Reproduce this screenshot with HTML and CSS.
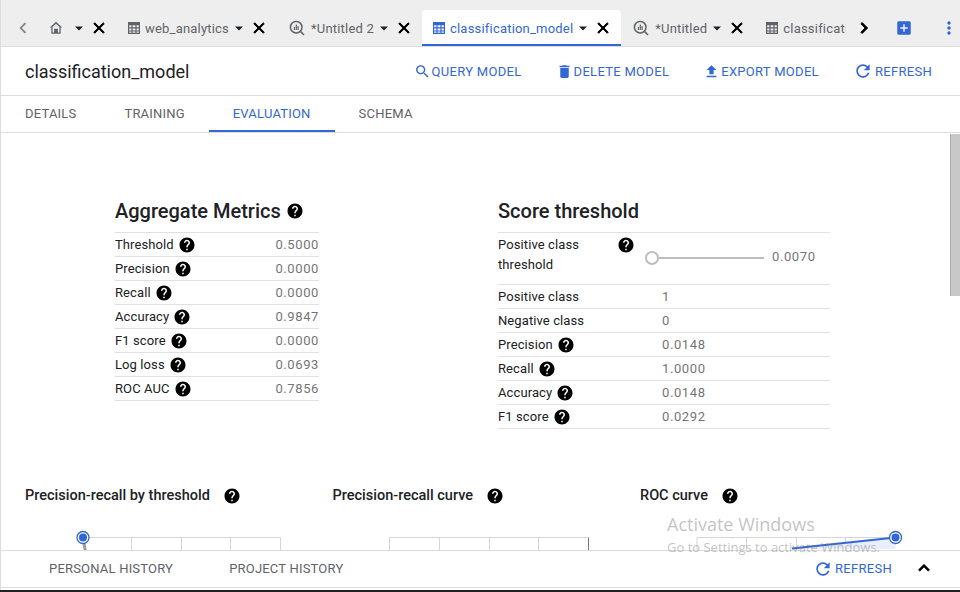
FILE: index.html
```html
<!DOCTYPE html>
<html lang="en">
<head>
    <meta charset="UTF-8">
    <meta name="viewport" content="width=device-width, initial-scale=1.0">
    <title>classification_model</title>
    <link rel="stylesheet" href="styles.css">
</head>
<body>

<svg class="defs" width="0" height="0">
    <symbol id="i-help" viewBox="0 0 24 24"><path d="M12 2C6.48 2 2 6.48 2 12s4.48 10 10 10 10-4.48 10-10S17.52 2 12 2zm1 17h-2v-2h2v2zm2.07-7.75l-.9.92C13.45 12.9 13 13.5 13 15h-2v-.5c0-1.1.45-2.1 1.17-2.83l1.24-1.26c.37-.36.59-.86.59-1.41 0-1.1-.9-2-2-2s-2 .9-2 2H8c0-2.21 1.79-4 4-4s4 1.79 4 4c0 .88-.36 1.68-.93 2.25z"/></symbol>
    <symbol id="i-close" viewBox="0 0 24 24"><path d="M19 6.41L17.59 5 12 10.59 6.41 5 5 6.41 10.59 12 5 17.59 6.41 19 12 13.41 17.59 19 19 17.59 13.41 12z" stroke="currentColor" stroke-width="1.2"/></symbol>
    <symbol id="i-caret" viewBox="0 0 16 16"><path d="M4 6.5h8l-4 4z"/></symbol>
    <symbol id="i-table" viewBox="0 0 18 18"><path fill-rule="evenodd" d="M3 3h12v12H3zM4.2 6.2v2h2.2v-2zm3.4 0v2h2.8v-2zm4 0v2h2.2v-2zM4.2 9.4v2h2.2v-2zm3.4 0v2h2.8v-2zm4 0v2h2.2v-2zM4.2 12.6v1.2h2.2v-1.2zm3.4 0v1.2h2.8v-1.2zm4 0v1.2h2.2v-1.2z"/></symbol>
    <symbol id="i-query" viewBox="0 0 18 18"><circle cx="8.2" cy="8.2" r="5.8" fill="none" stroke="currentColor" stroke-width="1.5"/><path d="M12.4 12.4l3.6 3.6" stroke="currentColor" stroke-width="1.5"/><path d="M5.8 8h1.2v3H5.800zM7.700 5.500h1.200V11H7.700zM9.500 7h1.200v4H9.500z"/></symbol>
    <symbol id="i-search" viewBox="0 0 24 24"><path d="M15.500 14h-.79l-.28-.27C15.410 12.590 16 11.110 16 9.500 16 5.910 13.090 3 9.500 3S3 5.910 3 9.500 5.910 16 9.500 16c1.610 0 3.090-.59 4.230-1.570l.27.28v.79l5 4.990L20.490 19l-4.990-5zm-6 0C7.010 14 5 11.990 5 9.500S7.010 5 9.500 5 14 7.010 14 9.500 11.990 14 9.500 14z"/></symbol>
    <symbol id="i-delete" viewBox="0 0 24 24"><path d="M6 19c0 1.100.9 2 2 2h8c1.100 0 2-.9 2-2V7H6v12zM19 4h-3.500l-1-1h-5l-1 1H5v2h14V4z"/></symbol>
    <symbol id="i-export" viewBox="0 0 24 24"><path d="M9 16h6v-6h4l-7-7-7 7h4zm-4 2h14v2H5z"/></symbol>
    <symbol id="i-refresh" viewBox="0 0 24 24"><path d="M17.650 6.350C16.200 4.900 14.210 4 12 4c-4.420 0-7.990 3.580-7.990 8s3.570 8 7.990 8c3.730 0 6.840-2.550 7.730-6h-2.080c-.82 2.330-3.040 4-5.650 4-3.310 0-6-2.690-6-6s2.690-6 6-6c1.660 0 3.140.69 4.220 1.780L13 11h7V4l-2.350 2.350z"/></symbol>
</svg>

<div class="app">

    <div class="tabbar">
        <svg class="nav-arrow grey" viewBox="0 0 24 24"><path d="M15.410 7.410L14 6l-6 6 6 6 1.410-1.410L10.830 12z"/></svg>

        <div class="tab">
            <svg class="tab-icon" viewBox="0 0 18 18"><path fill-rule="evenodd" d="M9 2.800L2.800 8.500h1.500v6.200h9.400V8.500h1.500zM9 4.700l3.400 3.100v5.700h-1.500v-3.700H7.100v3.700H5.600V7.800z"/></svg>
            <svg class="caret home-caret"><use href="#i-caret"/></svg>
            <svg class="close"><use href="#i-close"/></svg>
        </div>
        <div class="tab">
            <svg class="tab-icon"><use href="#i-table"/></svg>
            <span class="tab-label">web_analytics</span>
            <svg class="caret"><use href="#i-caret"/></svg>
            <svg class="close"><use href="#i-close"/></svg>
        </div>
        <div class="tab">
            <svg class="tab-icon query"><use href="#i-query"/></svg>
            <span class="tab-label">*Untitled 2</span>
            <svg class="caret"><use href="#i-caret"/></svg>
            <svg class="close"><use href="#i-close"/></svg>
        </div>
        <div class="tab active">
            <svg class="tab-icon"><use href="#i-table"/></svg>
            <span class="tab-label">classification_model</span>
            <svg class="caret"><use href="#i-caret"/></svg>
            <svg class="close"><use href="#i-close"/></svg>
        </div>
        <div class="tab">
            <svg class="tab-icon query"><use href="#i-query"/></svg>
            <span class="tab-label">*Untitled</span>
            <svg class="caret"><use href="#i-caret"/></svg>
            <svg class="close"><use href="#i-close"/></svg>
        </div>
        <div class="tab last">
            <svg class="tab-icon"><use href="#i-table"/></svg>
            <span class="tab-label clipped">classification_model</span>
        </div>

        <svg class="nav-arrow next" viewBox="0 0 24 24"><path d="M10 6L8.590 7.410 13.170 12l-4.580 4.590L10 18l6-6z" stroke="currentColor" stroke-width="1"/></svg>
        <svg class="add-tab" viewBox="0 0 24 24"><path d="M19 3H5c-1.110 0-2 .9-2 2v14c0 1.100.89 2 2 2h14c1.100 0 2-.9 2-2V5c0-1.100-.9-2-2-2zm-2 10h-4v4h-2v-4H7v-2h4V7h2v4h4v2z"/></svg>
        <svg class="more" viewBox="0 0 24 24"><path d="M12 8c1.100 0 2-.9 2-2s-.9-2-2-2-2 .9-2 2 .9 2 2 2zm0 2c-1.100 0-2 .9-2 2s.9 2 2 2 2-.9 2-2-.9-2-2-2zm0 6c-1.100 0-2 .9-2 2s.9 2 2 2 2-.9 2-2-.9-2-2-2z"/></svg>
    </div>

    <div class="page-header">
        <h1>classification_model</h1>
        <div class="actions">
            <a class="action"><svg><use href="#i-search"/></svg>QUERY MODEL</a>
            <a class="action"><svg><use href="#i-delete"/></svg>DELETE MODEL</a>
            <a class="action"><svg><use href="#i-export"/></svg>EXPORT MODEL</a>
            <a class="action"><svg class="big"><use href="#i-refresh"/></svg>REFRESH</a>
        </div>
    </div>

    <div class="subnav">
        <a>DETAILS</a>
        <a>TRAINING</a>
        <a class="active">EVALUATION</a>
        <a>SCHEMA</a>
    </div>

    <div class="main">
        <div class="metrics">
            <div class="aggregate">
                <h2>Aggregate Metrics <svg class="help"><use href="#i-help"/></svg></h2>
                <div class="table">
                    <div class="row"><span class="name">Threshold <svg class="help"><use href="#i-help"/></svg></span><span class="value">0.5000</span></div>
                    <div class="row"><span class="name">Precision <svg class="help"><use href="#i-help"/></svg></span><span class="value">0.0000</span></div>
                    <div class="row"><span class="name">Recall <svg class="help"><use href="#i-help"/></svg></span><span class="value">0.0000</span></div>
                    <div class="row"><span class="name">Accuracy <svg class="help"><use href="#i-help"/></svg></span><span class="value">0.9847</span></div>
                    <div class="row"><span class="name">F1 score <svg class="help"><use href="#i-help"/></svg></span><span class="value">0.0000</span></div>
                    <div class="row"><span class="name">Log loss <svg class="help"><use href="#i-help"/></svg></span><span class="value">0.0693</span></div>
                    <div class="row"><span class="name">ROC AUC <svg class="help"><use href="#i-help"/></svg></span><span class="value">0.7856</span></div>
                </div>
            </div>

            <div class="threshold">
                <h2>Score threshold</h2>
                <div class="table">
                    <div class="row tall">
                        <span class="tall-name">Positive class threshold</span>
                        <svg class="help tall-help"><use href="#i-help"/></svg>
                        <div class="slider"><span class="thumb"></span><span class="track"></span></div>
                        <span class="value">0.0070</span>
                    </div>
                    <div class="row wide"><span class="name">Positive class</span><span class="value">1</span></div>
                    <div class="row wide"><span class="name">Negative class</span><span class="value">0</span></div>
                    <div class="row wide"><span class="name">Precision <svg class="help"><use href="#i-help"/></svg></span><span class="value">0.0148</span></div>
                    <div class="row wide"><span class="name">Recall <svg class="help"><use href="#i-help"/></svg></span><span class="value">1.0000</span></div>
                    <div class="row wide"><span class="name">Accuracy <svg class="help"><use href="#i-help"/></svg></span><span class="value">0.0148</span></div>
                    <div class="row wide"><span class="name">F1 score <svg class="help"><use href="#i-help"/></svg></span><span class="value">0.0292</span></div>
                </div>
            </div>
        </div>

        <div class="charts">
            <div class="chart">
                <h3>Precision-recall by threshold <svg class="help"><use href="#i-help"/></svg></h3>
                <svg class="plot" viewBox="0 0 308 60">
                    <path class="grid" d="M58 12.500H255.500M106.500 12.500V60M156.500 12.500V60M205.500 12.500V60M255.500 12.500V60"/>
                    <path d="M58 12.500L61 30" stroke="#9e9e9e" stroke-width="3" fill="none"/>
                    <circle cx="58" cy="12.500" r="6" fill="#fff" stroke="#3367d6" stroke-width="1.300"/>
                    <circle cx="58" cy="12.500" r="4" fill="#3367d6"/>
                </svg>
            </div>
            <div class="chart">
                <h3>Precision-recall curve <svg class="help"><use href="#i-help"/></svg></h3>
                <svg class="plot" viewBox="0 0 308 60">
                    <path class="grid" d="M56.500 12.500H255.500M56.500 12.500V60M106.500 12.500V60M156.500 12.500V60M205.500 12.500V60"/>
                    <path d="M255.500 12.500V60" stroke="#757575" fill="none"/>
                </svg>
            </div>
            <div class="chart">
                <h3>ROC curve <svg class="help"><use href="#i-help"/></svg></h3>
                <svg class="plot" viewBox="0 0 308 60">
                    <path class="grid" d="M57 12.500H255.500M57 12.500V60M106.500 12.500V60M156.500 12.500V60M205.500 12.500V60"/>
                    <path d="M152 23.500L255.500 12.500V24z" fill="#e8eefb"/>
                    <path d="M152 23.500L255.500 12.500" stroke="#3367d6" stroke-width="2" fill="none"/>
                    <circle cx="255.500" cy="12.500" r="6" fill="#fff" stroke="#3367d6" stroke-width="1.300"/>
                    <circle cx="255.500" cy="12.500" r="4" fill="#3367d6"/>
                </svg>
            </div>
        </div>

        <div class="scroll-thumb"></div>
    </div>

    <div class="history">
        <a>PERSONAL HISTORY</a>
        <a>PROJECT HISTORY</a>
        <span class="action history-refresh"><svg class="big"><use href="#i-refresh"/></svg>REFRESH</span>
        <svg class="collapse" viewBox="0 0 24 24"><path d="M12 8l-6 6 1.410 1.410L12 10.830l4.590 4.580L18 14z" stroke="currentColor" stroke-width=".8"/></svg>
    </div>

    <div class="watermark">
        <div class="wm-title">Activate Windows</div>
        <div class="wm-sub">Go to Settings to activate Windows.</div>
    </div>
</div>

<div class="taskbar"></div>

</body>
</html>
```

FILE: styles.css
```css
* {
    box-sizing: border-box;
}
body {
    font-family: Roboto, 'Noto Sans', sans-serif;
    background-color: #ffffff;
    color: #202124;
    margin: 0;
    height: 592px;
    overflow: hidden;
    display: flex;
    flex-direction: column;
}
.defs {
    position: absolute;
}
svg {
    fill: currentColor;
    flex: none;
}
.app {
    position: relative;
    flex: 1;
    min-height: 0;
    display: flex;
    flex-direction: column;
    border-left: 1px solid #dddddd;
}
.taskbar {
    height: 2px;
    background: #202124;
}

/* top tab strip */
.tabbar {
    height: 47px;
    flex: none;
    display: flex;
    align-items: flex-end;
    background-color: #eeeeee;
    border-bottom: 1px solid #dddddd;
    padding-left: 13px;
}
.nav-arrow {
    width: 18px;
    height: 18px;
    margin-right: 9px;
    margin-bottom: 9px;
    color: #000;
}
.nav-arrow.grey {
    width: 22px;
    height: 22px;
    margin: 0 5px 7px -2px;
    color: #80868b;
}
.nav-arrow.next {
    width: 22px;
    height: 22px;
    margin: 0 0 7px 7px;
}
.tab {
    height: 36px;
    display: flex;
    align-items: center;
    padding: 0 9px 0 8px;
    font-size: 13px;
    letter-spacing: 0.2px;
    color: #5f6368;
}
.tab.active {
    background: #ffffff;
    color: #3367d6;
    border-radius: 4px 4px 0 0;
    border-bottom: 2px solid #3367d6;
    height: 36px;
    padding-top: 2px;
}
.tab.last {
    padding-right: 0;
}
.tab-icon {
    width: 18px;
    height: 18px;
    margin-right: 2px;
}
.tab-icon.query {
    margin-left: 3px;
    margin-right: 5px;
}
.tab-label {
    white-space: nowrap;
}
.clipped {
    width: 63px;
    overflow: hidden;
}
.caret {
    width: 16px;
    height: 16px;
    margin-left: 2px;
    color: #202124;
}
.home-caret {
    margin-left: 4px;
}
.close {
    width: 18px;
    height: 18px;
    margin-left: 3px;
    color: #000;
}
.add-tab {
    width: 18px;
    height: 18px;
    margin: 0 0 9px 20px;
    color: #3367d6;
}
.more {
    width: 20px;
    height: 20px;
    margin: 0 0 8px 26px;
    color: #3367d6;
}

/* header with model name */
.page-header {
    height: 49px;
    flex: none;
    display: flex;
    align-items: center;
    justify-content: space-between;
    padding: 0 28px 0 24px;
    border-bottom: 1px solid #dddddd;
}
h1 {
    margin: 0;
    font-size: 18px;
    font-weight: 400;
    color: #202124;
}
.actions {
    display: flex;
    gap: 34px;
}
.action {
    display: flex;
    align-items: center;
    gap: 1px;
    font-size: 13px;
    font-weight: 400;
    letter-spacing: 0.3px;
    color: #3367d6;
}
.action svg {
    width: 17px;
    height: 17px;
}
.action svg.big {
    width: 20px;
    height: 20px;
    margin-right: 1px;
}

/* evaluation tabs */
.subnav {
    height: 37px;
    flex: none;
    display: flex;
    border-bottom: 1px solid #dddddd;
}
.subnav a {
    padding: 0 24px;
    height: 36px;
    line-height: 35px;
    font-size: 13px;
    letter-spacing: 0.2px;
    color: #5f6368;
}
.subnav a.active {
    color: #3367d6;
    border-bottom: 2px solid #3367d6;
}

/* metrics */
.main {
    position: relative;
    flex: 1;
    min-height: 0;
    overflow: hidden;
    padding-top: 66px;
}
.metrics {
    display: flex;
    align-items: flex-start;
    padding-left: 114px;
    gap: 179px;
}
.aggregate {
    width: 204px;
}
.threshold {
    width: 332px;
}
h2 {
    margin: 0 0 9px;
    height: 24px;
    line-height: 24px;
    font-size: 20px;
    font-weight: 500;
    color: #202124;
    display: flex;
    align-items: center;
    gap: 5px;
}
.table {
    border-top: 1px solid #e0e0e0;
}
.row {
    height: 24px;
    display: flex;
    align-items: center;
    justify-content: space-between;
    border-bottom: 1px solid #e0e0e0;
    font-size: 13px;
    letter-spacing: 0.1px;
}
.name {
    display: flex;
    align-items: center;
    gap: 4px;
    color: #202124;
}
.value {
    color: #757575;
    letter-spacing: 0.6px;
}
.help {
    width: 18px;
    height: 18px;
    color: #000;
}
.row.wide {
    justify-content: flex-start;
}
.row.wide .name {
    width: 164px;
}
.row.tall {
    height: 52px;
    justify-content: flex-start;
    align-items: flex-start;
}
.tall-name {
    width: 108px;
    padding-top: 2px;
    line-height: 20px;
    color: #202124;
}
.tall-help {
    margin: 3px 0 0 11px;
}
.slider {
    display: flex;
    align-items: center;
    margin: 18px 8px 0 10px;
    width: 119px;
}
.thumb {
    width: 14px;
    height: 14px;
    border: 2px solid #bdbdbd;
    border-radius: 50%;
}
.track {
    flex: 1;
    height: 2px;
    background: #bdbdbd;
}
.row.tall .value {
    padding-top: 16px;
}

/* curves, cut off by the history panel */
.charts {
    display: flex;
    margin-top: 57px;
    padding-left: 24px;
}
.chart {
    width: 307.500px;
}
h3 {
    margin: 0;
    height: 20px;
    font-size: 14.500px;
    font-weight: 500;
    line-height: 20px;
    color: #202124;
    display: flex;
    align-items: center;
    gap: 13px;
}
.plot {
    display: block;
    width: 308px;
    height: 60px;
    margin-top: 19px;
    overflow: hidden;
}
.grid {
    fill: none;
    stroke: #d6d6d6;
}
.scroll-thumb {
    position: absolute;
    right: 0;
    top: 1px;
    width: 10px;
    height: 162px;
    background: #c8c8c8;
    border-left: 1px solid #aaaaaa;
}

/* bottom panel */
.history {
    height: 39px;
    flex: none;
    display: flex;
    align-items: flex-start;
    border-top: 1px solid #dddddd;
    border-bottom: 1px solid #dddddd;
    background: #ffffff;
    padding-left: 48px;
    margin-bottom: 2px;
    height: 38px;
    font-size: 13px;
    letter-spacing: 0.2px;
    color: #5f6368;
}
.history a {
    line-height: 35px;
    margin-right: 56px;
}
.history-refresh {
    margin-left: auto;
    height: 35px;
}
.collapse {
    width: 22px;
    height: 22px;
    margin: 6px 25px 0 21px;
    color: #000;
}
.watermark {
    position: absolute;
    left: 666px;
    top: 512px;
    font-family: 'Open Sans', sans-serif;
    color: rgba(120, 120, 120, 0.45);
    pointer-events: none;
}
.wm-title {
    font-size: 18px;
    line-height: 24px;
}
.wm-sub {
    font-size: 13px;
    line-height: 22px;
}
```
